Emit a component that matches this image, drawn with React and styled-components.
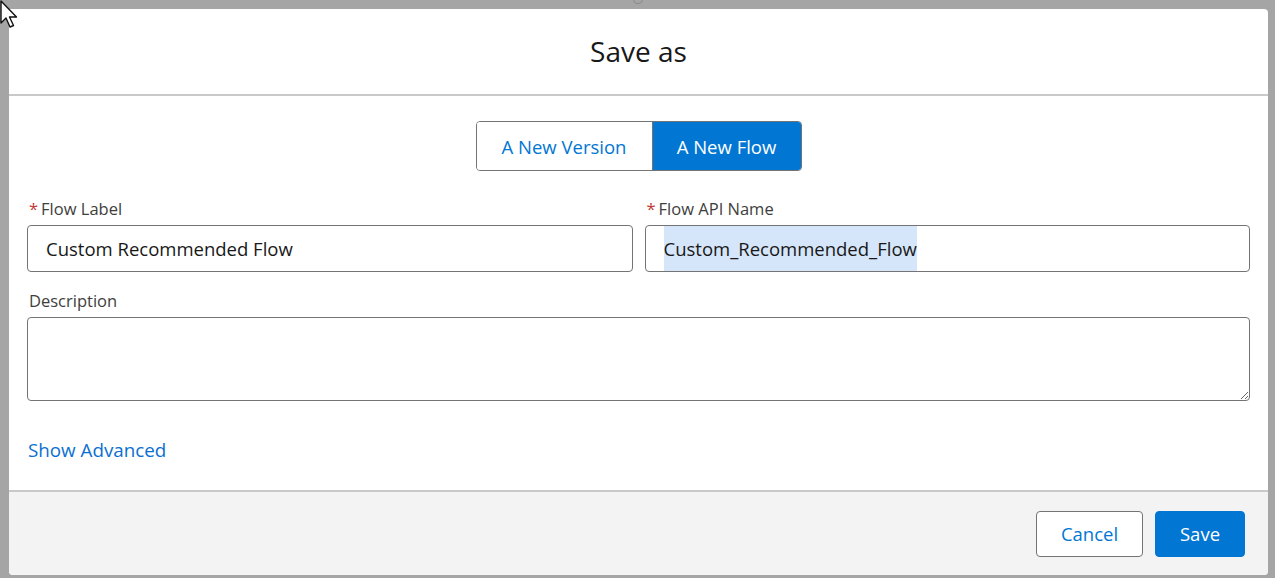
import React, { useState } from "react";
import styled, { createGlobalStyle } from "styled-components";

const GlobalStyle = createGlobalStyle`
  html, body {
    margin: 0;
    padding: 0;
    background: #a5a5a5;
    font-family: "Open Sans", "Noto Sans", Arial, sans-serif;
  }
  * { box-sizing: border-box; }
`;

const App = () => {
  const [mode, setMode] = useState("flow");
  const [label, setLabel] = useState("Custom Recommended Flow");

  return (
    <>
      <GlobalStyle />
      <Page>
        <Cursor viewBox="0 0 20 28" width="20" height="28">
          <path
            d="M1 1 L1 23 L6 18 L10 27 L13.5 25.5 L9.5 17 L16.5 17 Z"
            fill="#fff"
            stroke="#111"
            strokeWidth="1.4"
            strokeLinejoin="round"
          />
        </Cursor>
        <TopNub />
        <Modal>
          <Header>
            <Title>Save as</Title>
          </Header>

          <Body>
            <SegmentRow>
              <Segmented>
                <Segment $w={175} $active={mode === "version"} onClick={() => setMode("version")}>
                  A New Version
                </Segment>
                <Segment $w={149} $active={mode === "flow"} onClick={() => setMode("flow")}>
                  A New Flow
                </Segment>
              </Segmented>
            </SegmentRow>

            <FieldGrid>
              <Field>
                <Label>
                  <Required>*</Required>Flow Label
                </Label>
                <Input value={label} onChange={(e) => setLabel(e.target.value)} />
              </Field>
              <Field>
                <Label>
                  <Required>*</Required>Flow API Name
                </Label>
                <FakeInput>
                  <Selected>Custom_Recommended_Flow</Selected>
                </FakeInput>
              </Field>
            </FieldGrid>

            <Field>
              <Label>Description</Label>
              <TextArea />
            </Field>

            <LinkButton>Show Advanced</LinkButton>
          </Body>

          <Footer>
            <Button $w={107}>Cancel</Button>
            <Button $w={90} $brand>Save</Button>
          </Footer>
        </Modal>
      </Page>
    </>
  );
};

export default App;

/* ---------------- Styled Components ---------------- */
const Page = styled.div`
  position: relative;
  width: 1275px;
  height: 578px;
  padding: 9px 7px 3px 9px;
  overflow: hidden;
`;

const Cursor = styled.svg`
  position: absolute;
  left: 0;
  top: 0;
  z-index: 10;
`;

const TopNub = styled.div`
  position: absolute;
  left: 633px;
  top: -5px;
  width: 10px;
  height: 9px;
  border-radius: 50%;
  border: 1px solid #8a8a8a;
`;

const Modal = styled.div`
  height: 100%;
  display: flex;
  flex-direction: column;
  background: #fff;
  border-radius: 0 4px 4px 4px;
  overflow: hidden;
`;

const Header = styled.div`
  height: 87px;
  flex: none;
  display: flex;
  align-items: center;
  justify-content: center;
  border-bottom: 2px solid #c9c9c9;
  padding-bottom: 2px;
`;

const Title = styled.h2`
  margin: 0;
  font-size: 28px;
  font-weight: 400;
  color: #181818;
`;

const Body = styled.div`
  flex: 1;
  padding: 25px 18px 0 18px;
  display: flex;
  flex-direction: column;
`;

const SegmentRow = styled.div`
  display: flex;
  justify-content: center;
  margin-bottom: 27px;
`;

const Segmented = styled.div`
  display: flex;
  border: 1px solid #747474;
  border-radius: 4px;
  overflow: hidden;
  height: 50px;
`;

const Segment = styled.button`
  width: ${(p) => p.$w}px;
  font-family: inherit;
  font-size: 18.5px;
  border: none;
  padding: 0;
  cursor: pointer;
  background: ${(p) => (p.$active ? "#0176d3" : "#fff")};
  color: ${(p) => (p.$active ? "#fff" : "#0176d3")};
  & + & {
    border-left: 1px solid #747474;
  }
`;

const FieldGrid = styled.div`
  display: grid;
  grid-template-columns: 1fr 1fr;
  gap: 12px;
  margin-bottom: 18px;
`;

const Field = styled.div`
  display: flex;
  flex-direction: column;
`;

const Label = styled.label`
  font-size: 16.5px;
  color: #3e3e3c;
  line-height: 22px;
  margin-bottom: 5px;
  padding-left: 2px;
`;

const Required = styled.abbr`
  color: #c23934;
  margin-right: 3px;
  text-decoration: none;
`;

const inputBase = `
  height: 47px;
  width: 100%;
  border: 1px solid #747474;
  border-radius: 4px;
  font-family: inherit;
  font-size: 18.5px;
  color: #181818;
  padding: 0 18px;
  background: #fff;
`;

const Input = styled.input`
  ${inputBase}
  outline: none;
`;

const FakeInput = styled.div`
  ${inputBase}
  display: flex;
  align-items: stretch;
`;

const Selected = styled.span`
  display: flex;
  align-items: center;
  background: #d6e6fa;
`;

const TextArea = styled.textarea`
  height: 84px;
  width: 100%;
  border: 1px solid #747474;
  border-radius: 4px;
  font-family: inherit;
  font-size: 18.5px;
  resize: vertical;
  padding: 8px 18px;
`;

const LinkButton = styled.button`
  align-self: flex-start;
  margin-top: 36px;
  background: none;
  border: none;
  padding: 0 0 0 1px;
  font-family: inherit;
  font-size: 18.8px;
  color: #0b6fd0;
  cursor: pointer;
`;

const Footer = styled.div`
  flex: none;
  height: 85px;
  background: #f3f3f3;
  border-top: 2px solid #c9c9c9;
  display: flex;
  align-items: center;
  justify-content: flex-end;
  gap: 12px;
  padding: 0 23px 0 0;
`;

const Button = styled.button`
  height: 46px;
  width: ${(p) => p.$w}px;
  padding: 0;
  border-radius: 4px;
  font-family: inherit;
  font-size: 18.5px;
  cursor: pointer;
  border: 1px solid ${(p) => (p.$brand ? "#0176d3" : "#747474")};
  background: ${(p) => (p.$brand ? "#0176d3" : "#fff")};
  color: ${(p) => (p.$brand ? "#fff" : "#0176d3")};
`;
